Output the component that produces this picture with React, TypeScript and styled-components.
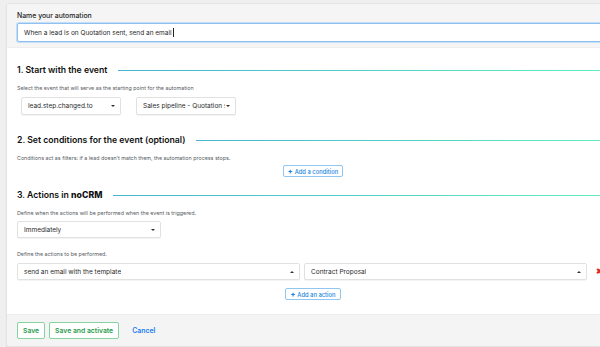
import styled, { createGlobalStyle } from 'styled-components'

const GlobalStyle = createGlobalStyle`
  html, body {
    margin: 0;
    padding: 0;
    background: #efefef;
    overflow: hidden;
  }
  body {
    font-family: Inter, "Liberation Sans", sans-serif;
    color: #222;
  }
  * { box-sizing: border-box; }
`

const Card = styled.div`
  margin: 3px 0 0 6px;
  width: 614px;
  background: #fff;
  border: 1px solid #e3e3e3;
  border-radius: 3px;
  box-shadow: 0 1px 1px rgba(0, 0, 0, 0.12);
  overflow: hidden;
`

const Header = styled.div`
  background: #f5f5f5;
  padding: 7px 10px 5px;
  border-bottom: 1px solid #ededed;
`

const Label = styled.div`
  font-size: 6.9px;
  line-height: 9px;
  font-weight: 500;
  color: #1e1e1e;
  margin-bottom: 3px;
`

const NameInput = styled.div`
  height: 19px;
  width: 100%;
  display: flex;
  align-items: center;
  padding: 0 6px;
  background: #fff;
  border: 1px solid #8ec1f2;
  box-shadow: 0 0 0 1px #c4def8;
  border-radius: 2px;
  font-size: 6.5px;
  color: #1f1f1f;
`

const Caret = styled.span`
  display: inline-block;
  width: 1px;
  height: 9px;
  margin-left: 1px;
  background: #222;
`

const Body = styled.div`
  padding: 16px 10px 14px;
`

const SectionTitle = styled.div<{ $top?: number }>`
  display: flex;
  align-items: center;
  gap: 11px;
  margin-top: ${p => p.$top ?? 0}px;
  height: 12px;
  font-size: 8.7px;
  font-weight: 600;
  color: #111;

  b {
    font-weight: 800;
  }
`

const TitleLine = styled.div`
  flex: 1;
  height: 1px;
  background: linear-gradient(90deg, #45b4cf, #60eebf);
`

const Description = styled.div<{ $top?: number }>`
  margin-top: ${p => p.$top ?? 8}px;
  font-size: 5.35px;
  line-height: 8px;
  color: #565b62;
`

const Row = styled.div<{ $top?: number; $inset?: number }>`
  display: flex;
  gap: 15px;
  margin-top: ${p => p.$top ?? 5}px;
  padding-left: ${p => p.$inset ?? 0}px;
`

const ActionRow = styled.div`
  display: grid;
  grid-template-columns: 1fr 1fr 18px;
  gap: 4px;
  align-items: center;
  margin-top: 5px;
`

const Select = styled.div<{ $width?: number; $height?: number }>`
  width: ${p => (p.$width ? `${p.$width}px` : '100%')};
  height: ${p => p.$height ?? 17}px;
  display: flex;
  align-items: center;
  justify-content: space-between;
  padding: 0 5px 0 6px;
  background: #fff;
  border: 1px solid #e1e1e1;
  border-radius: 2px;
  box-shadow: 0 1px 1px rgba(0, 0, 0, 0.05);
  font-size: 6.5px;
  color: #2a2a2a;
  white-space: nowrap;
  overflow: hidden;
`

const SelectText = styled.span`
  overflow: hidden;
`

const Arrow = styled.span<{ $up?: boolean }>`
  flex: none;
  width: 0;
  height: 0;
  margin-left: 1px;
  border-left: 2px solid transparent;
  border-right: 2px solid transparent;
  ${p =>
    p.$up
      ? 'border-bottom: 2px solid #333;'
      : 'border-top: 2px solid #333;'}
`

const Remove = styled.span`
  color: #e3262b;
  font-size: 7.5px;
  font-weight: 700;
  padding-left: 5px;
`

const Center = styled.div<{ $top?: number }>`
  display: flex;
  justify-content: center;
  margin-top: ${p => p.$top ?? 3}px;
`

const AddButton = styled.button`
  height: 12px;
  display: flex;
  align-items: center;
  gap: 2px;
  padding: 0 4px;
  background: #fff;
  border: 1px solid #90c6f2;
  border-radius: 2px;
  color: #1b86dd;
  font-family: inherit;
  font-size: 5.8px;
  font-weight: 500;
`

const Plus = styled.span`
  font-size: 7px;
  font-weight: 900;
  line-height: 1;
`

const Footer = styled.div`
  display: flex;
  align-items: center;
  gap: 4px;
  padding: 7px 10px 7px;
  background: #f4f4f4;
  border-top: 1px solid #eeeeee;
`

const SaveButton = styled.button`
  height: 17px;
  padding: 0 5px;
  background: #fff;
  border: 1px solid #86d3a0;
  border-radius: 2px;
  color: #1f9a4a;
  font-family: inherit;
  font-size: 6.8px;
  font-weight: 600;
`

const CancelLink = styled.span`
  margin-left: 9px;
  color: #1a7ef0;
  font-size: 6.9px;
  font-weight: 600;
`

export default function App() {
  return (
    <>
      <GlobalStyle />
      <Card>
        <Header>
          <Label>Name your automation</Label>
          <NameInput>
            When a lead is on Quotation sent, send an email
            <Caret />
          </NameInput>
        </Header>
        <Body>
          <SectionTitle>
            1. Start with the event
            <TitleLine />
          </SectionTitle>
          <Description>
            Select the event that will serve as the starting point for the automation
          </Description>
          <Row $inset={4}>
            <Select $width={100} $height={18}>
              <SelectText>lead.step.changed.to</SelectText>
              <Arrow />
            </Select>
            <Select $width={100} $height={18}>
              <SelectText>Sales pipeline - Quotation sent</SelectText>
              <Arrow />
            </Select>
          </Row>

          <SectionTitle $top={19}>
            2. Set conditions for the event (optional)
            <TitleLine />
          </SectionTitle>
          <Description>
            Conditions act as filters: if a lead doesn’t match them, the automation process stops.
          </Description>
          <Center>
            <AddButton>
              <Plus>+</Plus> Add a condition
            </AddButton>
          </Center>

          <SectionTitle $top={12}>
            <span>
              3. Actions in <b>noCRM</b>
            </span>
            <TitleLine />
          </SectionTitle>
          <Description>Define when the actions will be performed when the event is triggered.</Description>
          <Row $top={4}>
            <Select $width={144}>
              <SelectText>Immediately</SelectText>
              <Arrow />
            </Select>
          </Row>
          <Description $top={12}>Define the actions to be performed.</Description>
          <ActionRow>
            <Select>
              <SelectText>send an email with the template</SelectText>
              <Arrow $up />
            </Select>
            <Select>
              <SelectText>Contract Proposal</SelectText>
              <Arrow $up />
            </Select>
            <Remove>✖</Remove>
          </ActionRow>
          <Center $top={8}>
            <AddButton>
              <Plus>+</Plus> Add an action
            </AddButton>
          </Center>
        </Body>
        <Footer>
          <SaveButton>Save</SaveButton>
          <SaveButton>Save and activate</SaveButton>
          <CancelLink>Cancel</CancelLink>
        </Footer>
      </Card>
    </>
  )
}
